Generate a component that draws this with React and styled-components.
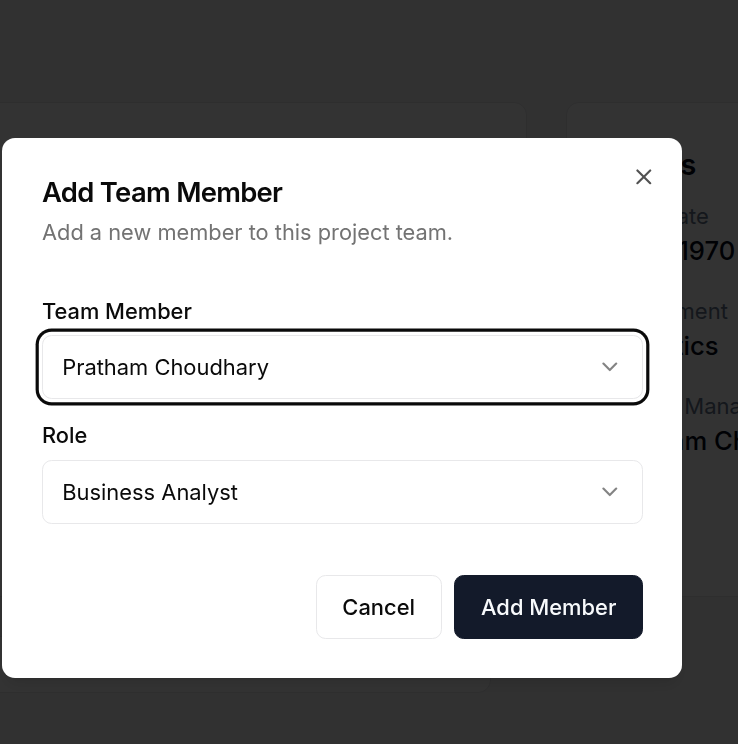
import React from "react";
import styled, { createGlobalStyle } from "styled-components";
import { ChevronDown, X } from "lucide-react";

/**
 * Global reset
 */
const GlobalStyle = createGlobalStyle`
  html, body {
    margin: 0;
    padding: 0;
  }
  body {
    background: #f4f4f5;
    font-family: Inter, "Noto Sans", sans-serif;
    color: #020817;
    overflow: hidden;
  }
  * {
    box-sizing: border-box;
  }
`;

/**
 * Component definition
 */
export default function App() {
  return (
    <>
      <GlobalStyle />
      <Page>
        <Column>
          <Card $height={495} />
          <Card $height={57} $width={524} />
        </Column>
        <Card $height={495} $padded>
          <CardTitle>Details</CardTitle>
          <InfoList>
            <InfoItem>
              <InfoLabel>Start Date</InfoLabel>
              <InfoValue>01/01/1970</InfoValue>
            </InfoItem>
            <InfoItem>
              <InfoLabel>Department</InfoLabel>
              <InfoValue>Analytics</InfoValue>
            </InfoItem>
            <InfoItem>
              <InfoLabel>Project Manager</InfoLabel>
              <InfoValue>Pratham Choudhary</InfoValue>
            </InfoItem>
          </InfoList>
        </Card>
      </Page>

      <Overlay />
      <Dialog role="dialog" aria-labelledby="dlg-title">
        <Header>
          <Title id="dlg-title">Add Team Member</Title>
          <Description>Add a new member to this project team.</Description>
        </Header>

        <Form>
          <Field>
            <Label>Team Member</Label>
            <SelectTrigger $focused>
              <span>Pratham Choudhary</span>
              <ChevronDown size={25.6} strokeWidth={2} />
            </SelectTrigger>
          </Field>
          <Field>
            <Label>Role</Label>
            <SelectTrigger>
              <span>Business Analyst</span>
              <ChevronDown size={25.6} strokeWidth={2} />
            </SelectTrigger>
          </Field>
        </Form>

        <Footer>
          <Button $variant="outline">Cancel</Button>
          <Button>Add Member</Button>
        </Footer>

        <CloseButton aria-label="Close">
          <X size={25.6} strokeWidth={2} />
        </CloseButton>
      </Dialog>
    </>
  );
}

/**
 * Background page
 */
const Page = styled.div`
  height: 744px;
  padding-top: 102px;
  margin-left: -33px;
  display: grid;
  grid-template-columns: 560px 560px;
  column-gap: 39px;
  align-items: start;
`;

const Column = styled.div`
  display: flex;
  flex-direction: column;
  gap: 39px;
`;

const Card = styled.div`
  height: ${(p) => p.$height}px;
  width: ${(p) => (p.$width ? `${p.$width}px` : "auto")};
  background: #ffffff;
  border: 1px solid #e4e4e7;
  border-radius: 13px;
  padding: ${(p) => (p.$padded ? "48px 38px" : "0")};
`;

const CardTitle = styled.h3`
  margin: 0;
  font-size: 28.8px;
  line-height: 1;
  font-weight: 600;
  letter-spacing: -0.025em;
`;

const InfoList = styled.div`
  display: flex;
  flex-direction: column;
  gap: 24.6px;
  margin-top: 20px;
`;

const InfoItem = styled.div`
  display: flex;
  flex-direction: column;
`;

const InfoLabel = styled.div`
  font-size: 22px;
  line-height: 32px;
  color: #64748b;
`;

const InfoValue = styled.div`
  font-size: 25.6px;
  line-height: 38.4px;
  font-weight: 500;
  color: #020817;
`;

/**
 * Modal
 */
const Overlay = styled.div`
  position: fixed;
  inset: 0;
  background: rgba(0, 0, 0, 0.8);
`;

const Dialog = styled.div`
  position: fixed;
  left: 2px;
  top: 138px;
  width: 680px;
  display: grid;
  gap: 25.6px;
  padding: 40px 39px 39px 40px;
  background: #ffffff;
  border-radius: 13px;
  box-shadow: 0 10px 15px -3px rgba(0, 0, 0, 0.1), 0 4px 6px -4px rgba(0, 0, 0, 0.1);
`;

const Header = styled.div`
  display: flex;
  flex-direction: column;
  gap: 9.6px;
`;

const Title = styled.h2`
  margin: 0;
  font-size: 27.4px;
  line-height: 28.8px;
  font-weight: 600;
  letter-spacing: -0.025em;
  color: #0a0a0a;
`;

const Description = styled.p`
  margin: 0;
  font-size: 21.8px;
  line-height: 32px;
  color: #737373;
`;

const Form = styled.div`
  display: grid;
  gap: 25.6px;
  padding: 25.6px 0;
`;

const Field = styled.div`
  display: grid;
  gap: 12.8px;
`;

const Label = styled.label`
  font-size: 21.8px;
  line-height: 22.4px;
  font-weight: 500;
  color: #0a0a0a;
`;

const SelectTrigger = styled.button`
  display: flex;
  align-items: center;
  justify-content: space-between;
  height: 64px;
  width: 100%;
  padding: 0 19.2px;
  background: #ffffff;
  border: 1px solid #e8e8ea;
  border-radius: 9.6px;
  font-family: inherit;
  font-size: 21.9px;
  color: #0a0a0a;
  text-align: left;
  box-shadow: ${(p) =>
    p.$focused ? "0 0 0 3.2px #ffffff, 0 0 0 6.4px #0a0a0a" : "none"};

  svg {
    opacity: 0.5;
    flex-shrink: 0;
  }
`;

const Footer = styled.div`
  display: flex;
  justify-content: flex-end;
  gap: 12.8px;
`;

const Button = styled.button`
  height: 64px;
  padding: 0 25.6px;
  border-radius: 9.6px;
  font-family: inherit;
  font-size: 21.9px;
  font-weight: 500;
  border: 1px solid ${(p) => (p.$variant === "outline" ? "#e8e8ea" : "#131a2a")};
  background: ${(p) => (p.$variant === "outline" ? "#ffffff" : "#131a2a")};
  color: ${(p) => (p.$variant === "outline" ? "#0a0a0a" : "#f8fafc")};
`;

const CloseButton = styled.button`
  position: absolute;
  top: 25.6px;
  right: 25.6px;
  width: 25.6px;
  height: 25.6px;
  padding: 0;
  border: 0;
  background: transparent;
  color: #0a0a0a;
  opacity: 0.7;
  display: flex;

  svg {
    display: block;
  }
`;
